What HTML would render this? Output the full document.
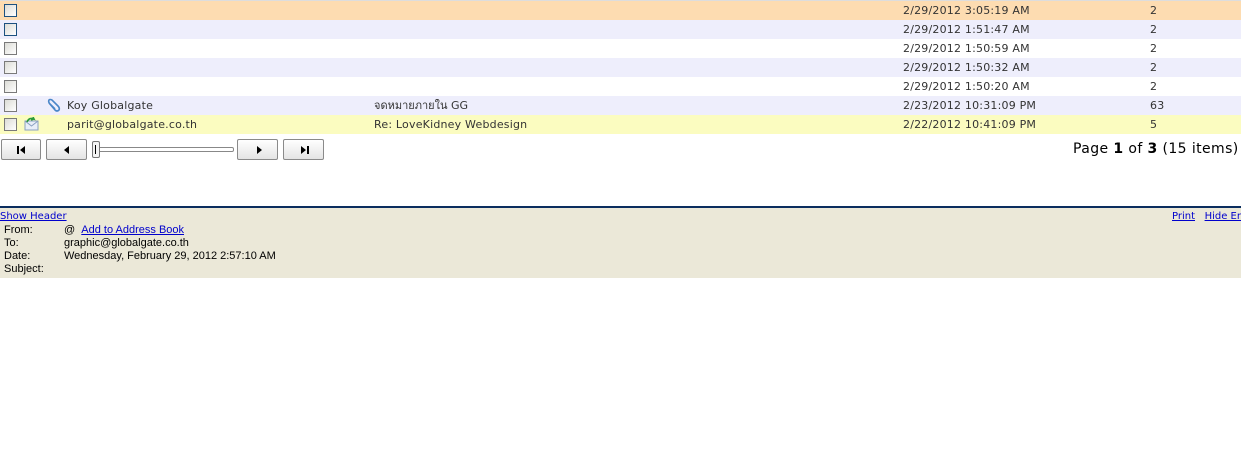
<!DOCTYPE html>
<html><head><meta charset="utf-8"><style>
body{margin:0;width:1241px;height:458px;background:#fff;position:relative;overflow:hidden;font-family:"DejaVu Sans",Verdana,sans-serif;}
.r{position:absolute;left:0;width:1241px;height:19px;font-size:11px;color:#333;}
.r span{position:absolute;top:3px;white-space:nowrap;line-height:13px;height:13px;letter-spacing:0.2px}
.cb{position:absolute;left:4px;top:3px;width:11px;height:11px;border:1px solid #7a7a7a;background:linear-gradient(135deg,#dcdcd6,#fff);}
.cb.b{border:1px solid #1c5180;}
.btn{position:absolute;top:139px;height:21px;border:1px solid #8a8a8a;border-radius:2px;background:linear-gradient(#fff,#e4e4e4);box-sizing:border-box;}
.btn i{position:absolute;top:6px;}
.h{position:absolute;font-family:"Liberation Sans",Tahoma,sans-serif;font-size:11px;color:#000;white-space:nowrap;line-height:13px}
a{color:#00c;text-decoration:underline;}
</style></head><body>
<div style="position:absolute;left:0;top:0;width:1241px;height:1px;background:#ddd"></div>
<div class="r" style="top:1px;background:#fddcb1"><div class="cb b"></div><span style="left:903px">2/29/2012 3:05:19 AM</span><span style="left:1150px">2</span></div>
<div class="r" style="top:20px;background:#eeeefc"><div class="cb b"></div><span style="left:903px">2/29/2012 1:51:47 AM</span><span style="left:1150px">2</span></div>
<div class="r" style="top:39px;background:#fff"><div class="cb"></div><span style="left:903px">2/29/2012 1:50:59 AM</span><span style="left:1150px">2</span></div>
<div class="r" style="top:58px;background:#eeeefc"><div class="cb"></div><span style="left:903px">2/29/2012 1:50:32 AM</span><span style="left:1150px">2</span></div>
<div class="r" style="top:77px;background:#fff"><div class="cb"></div><span style="left:903px">2/29/2012 1:50:20 AM</span><span style="left:1150px">2</span></div>
<div class="r" style="top:96px;background:#eeeefc"><div class="cb"></div>
<svg style="position:absolute;left:46px;top:2px" width="16" height="15"><path d="M3 5 L9 12 Q11 14 13 12 Q14 10 12 8 L6 2 Q4 1 3 2 Q2 4 4 6 L9 11" fill="none" stroke="#4a86c8" stroke-width="1.6"/></svg>
<span style="left:67px">Koy Globalgate</span><span style="left:374px;letter-spacing:0">จดหมายภายใน GG</span><span style="left:903px">2/23/2012 10:31:09 PM</span><span style="left:1150px">63</span></div>
<div class="r" style="top:115px;background:#fbfcc0"><div class="cb"></div>
<svg style="position:absolute;left:24px;top:2px" width="16" height="14"><rect x="1" y="4" width="13" height="9" fill="#e8eef8" stroke="#8aa0c0"/><path d="M1 4 L7.5 9 L14 4" fill="none" stroke="#8aa0c0"/><path d="M3 5 Q5 0 10 2 L9 0 M10 2 L7 3" fill="none" stroke="#2a9a3a" stroke-width="1.6"/></svg>
<span style="left:67px">parit@globalgate.co.th</span><span style="left:374px">Re: LoveKidney Webdesign</span><span style="left:903px">2/22/2012 10:41:09 PM</span><span style="left:1150px">5</span></div>

<div class="btn" style="left:1px;width:40px"><i style="left:15px;width:2px;height:8px;background:#000"></i><i style="left:18px;width:0;height:0;border-top:4px solid transparent;border-bottom:4px solid transparent;border-right:5px solid #000"></i></div>
<div class="btn" style="left:46px;width:41px"><i style="left:17px;width:0;height:0;border-top:4px solid transparent;border-bottom:4px solid transparent;border-right:5px solid #000"></i></div>
<div style="position:absolute;left:97px;top:147px;width:135px;height:3px;border:1px solid #888;border-radius:2px;background:#fff"></div>
<div style="position:absolute;left:92px;top:141px;width:6px;height:15px;border:1px solid #777;border-radius:2px;background:#f4f4f4"><div style="position:absolute;left:2px;top:3px;width:1px;height:9px;background:#000"></div></div>
<div class="btn" style="left:237px;width:41px"><i style="left:19px;width:0;height:0;border-top:4px solid transparent;border-bottom:4px solid transparent;border-left:5px solid #000"></i></div>
<div class="btn" style="left:283px;width:41px"><i style="left:17px;width:0;height:0;border-top:4px solid transparent;border-bottom:4px solid transparent;border-left:5px solid #000"></i><i style="left:23px;width:2px;height:8px;background:#000"></i></div>
<div style="position:absolute;left:1073px;top:141px;font-size:14px;font-family:'DejaVu Sans',Verdana,sans-serif;color:#000;letter-spacing:0.4px;white-space:nowrap">Page <b>1</b> of <b>3</b> (15 items)</div>

<div style="position:absolute;left:0;top:206px;width:1241px;height:2px;background:#0b2d5e"></div>
<div style="position:absolute;left:0;top:208px;width:1241px;height:70px;background:#ebe8d8"></div>
<div class="h" style="left:0;top:210px;font-size:10px;font-family:'DejaVu Sans',sans-serif"><a>Show Header</a></div>
<div class="h" style="left:1172px;top:210px;font-size:10px;font-family:'DejaVu Sans',sans-serif"><a>Print</a>&nbsp;&nbsp;&nbsp;<a>Hide En</a></div>
<div class="h" style="left:4px;top:224px">From:</div><div class="h" style="left:64px;top:224px">@&nbsp;&nbsp;<a>Add to Address Book</a></div>
<div class="h" style="left:4px;top:237px">To:</div><div class="h" style="left:64px;top:237px">graphic@globalgate.co.th</div>
<div class="h" style="left:4px;top:250px">Date:</div><div class="h" style="left:64px;top:250px">Wednesday, February 29, 2012 2:57:10 AM</div>
<div class="h" style="left:4px;top:263px">Subject:</div>
</body></html>
